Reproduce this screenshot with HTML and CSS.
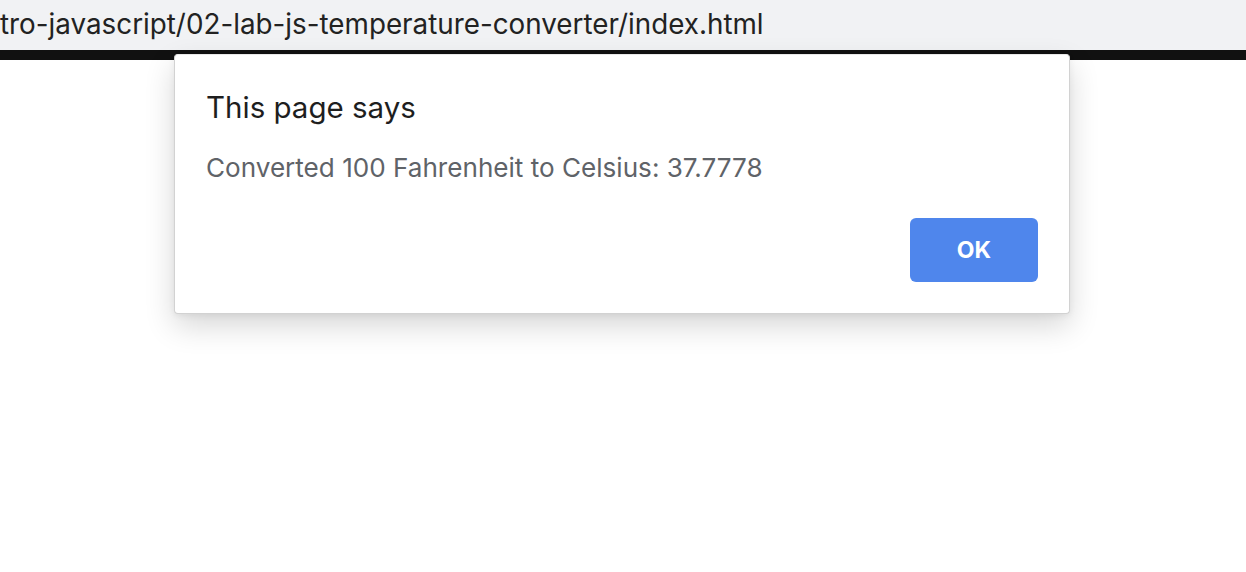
FILE: index.html
```html
<!DOCTYPE html>
<html>
<head>
<meta charset="utf-8">
<link rel="stylesheet" href="styles.css">
</head>
<body>
<div class="urlbar"><span class="url">tro-javascript/02-lab-js-temperature-converter/index.html</span></div>
<div class="strip"></div>
<div class="page"></div>
<div class="dialog">
  <div class="title">This page says</div>
  <div class="message">Converted 100 Fahrenheit to Celsius: 37.7778</div>
  <div class="actions"><button class="ok">OK</button></div>
</div>
</body>
</html>
```
FILE: styles.css
```css
html, body { margin: 0; padding: 0; background: #fff; }
body { font-family: Inter, "Noto Sans", "Liberation Sans", sans-serif; width: 1246px; height: 572px; overflow: hidden; position: relative; }
.urlbar { height: 50px; background: #f1f2f4; display: flex; align-items: center; overflow: hidden; white-space: nowrap; }
.url { font-size: 27.8px; color: #222; margin-left: 0; padding-bottom: 2px; }
.strip { height: 10px; background: #111; }
.dialog { position: absolute; left: 174px; top: 54px; width: 896px; height: 260px; box-sizing: border-box; background: #fff; border-radius: 4px; border: 1px solid #d2d2d2; border-top-color: #e8e8e8; box-shadow: 0 12px 30px rgba(0,0,0,0.16), 0 2px 6px rgba(0,0,0,0.06); padding: 34px 31px 0 31px; display: flex; flex-direction: column; }
.title { font-size: 29.5px; color: #1e1e1e; line-height: 36px; }
.message { font-size: 26.1px; color: #5f6368; line-height: 32px; margin-top: 27px; }
.actions { display: flex; justify-content: flex-end; margin-top: 34px; }
.ok { width: 128px; height: 64px; border: none; border-radius: 6px; background: #4f86ec; color: #fff; font-family: inherit; font-size: 23px; font-weight: 700; padding: 0; }
```
